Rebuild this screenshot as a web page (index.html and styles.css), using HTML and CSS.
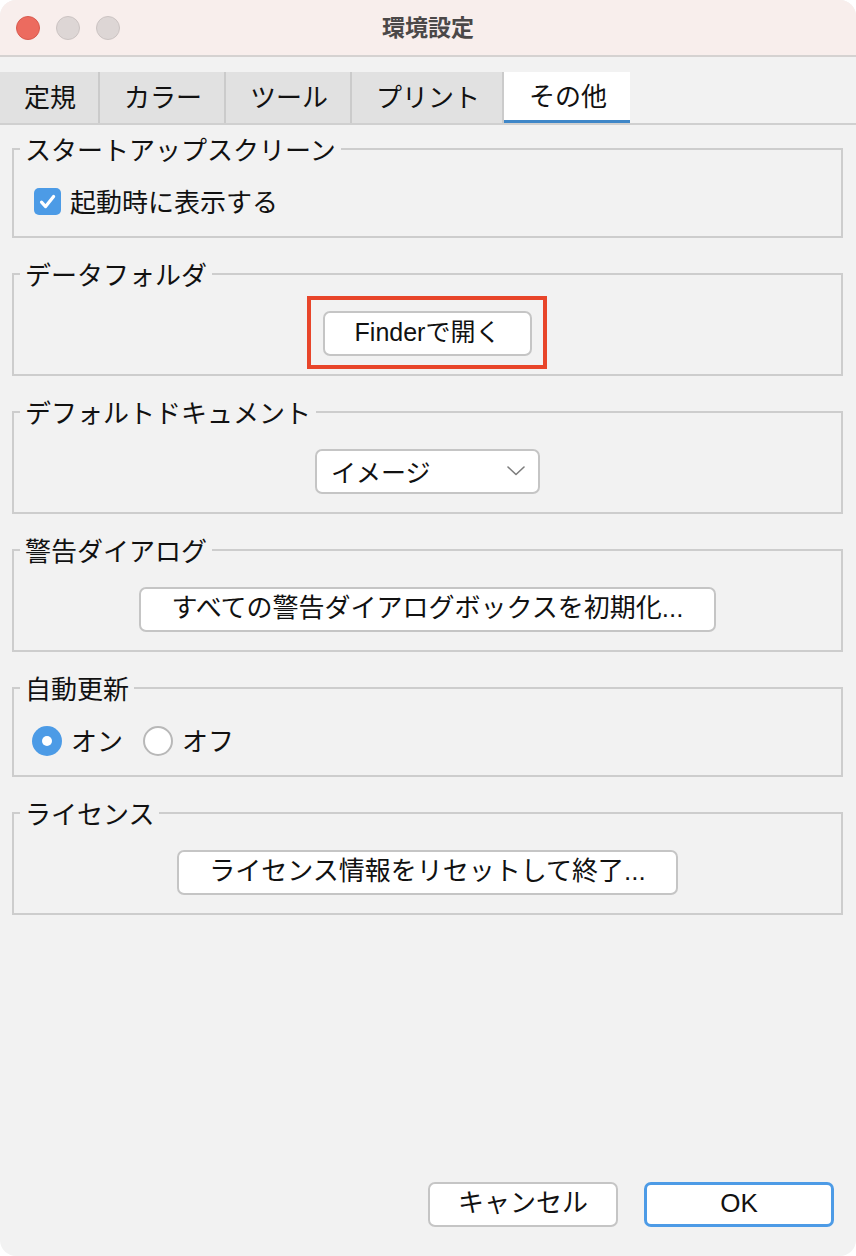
FILE: index.html
```html
<!DOCTYPE html>
<html lang="ja">
<head>
<meta charset="utf-8">
<title>環境設定</title>
<link rel="stylesheet" href="styles.css">
</head>
<body>
<div class="window">
  <header class="titlebar">
    <div class="lights">
      <span class="light light-red"></span>
      <span class="light"></span>
      <span class="light"></span>
    </div>
    <div class="title">環境設定</div>
    <div></div>
  </header>

  <nav class="tabs">
    <div class="tab">定規</div>
    <div class="tab">カラー</div>
    <div class="tab">ツール</div>
    <div class="tab">プリント</div>
    <div class="tab tab-active">その他</div>
  </nav>

  <main class="panel">
    <fieldset class="group group-compact">
      <legend>スタートアップスクリーン</legend>
      <div class="row row-left">
        <span class="checkbox">
          <svg width="27" height="27" viewBox="0 0 27 27"><path d="M7.5 14.2 L11.6 18.6 L19.6 8.4" fill="none" stroke="#fff" stroke-width="3.2" stroke-linecap="round" stroke-linejoin="round"/></svg>
        </span>
        <span class="label">起動時に表示する</span>
      </div>
    </fieldset>

    <fieldset class="group">
      <legend>データフォルダ</legend>
      <div class="row row-center">
        <button class="btn btn-highlight">Finderで開く</button>
      </div>
    </fieldset>

    <fieldset class="group">
      <legend>デフォルトドキュメント</legend>
      <div class="row row-center">
        <div class="select">
          <span>イメージ</span>
          <svg width="20" height="12" viewBox="0 0 20 12"><polyline points="2,2 10,9.5 18,2" fill="none" stroke="#7d7d7d" stroke-width="1.6" stroke-linecap="round" stroke-linejoin="round"/></svg>
        </div>
      </div>
    </fieldset>

    <fieldset class="group">
      <legend>警告ダイアログ</legend>
      <div class="row row-center">
        <button class="btn">すべての警告ダイアログボックスを初期化...</button>
      </div>
    </fieldset>

    <fieldset class="group group-compact">
      <legend>自動更新</legend>
      <div class="row row-left radios">
        <span class="radio-item"><span class="radio radio-on"></span><span class="label">オン</span></span>
        <span class="radio-item"><span class="radio"></span><span class="label">オフ</span></span>
      </div>
    </fieldset>

    <fieldset class="group">
      <legend>ライセンス</legend>
      <div class="row row-center">
        <button class="btn">ライセンス情報をリセットして終了...</button>
      </div>
    </fieldset>
  </main>

  <footer class="footer">
    <button class="btn btn-footer">キャンセル</button>
    <button class="btn btn-footer btn-default">OK</button>
  </footer>
</div>
</body>
</html>
```

FILE: styles.css
```css
* { box-sizing: border-box; }

html, body {
  margin: 0;
  padding: 0;
  background: #ffffff;
}

body {
  font-family: "Liberation Sans", "Noto Sans CJK JP", sans-serif;
  color: #111;
}

.window {
  width: 856px;
  height: 1256px;
  background: #f2f2f2;
  border-radius: 16px;
  overflow: hidden;
  display: flex;
  flex-direction: column;
}

/* Title bar */
.titlebar {
  height: 57px;
  flex: none;
  background: #f8eeec;
  border-bottom: 2px solid #d5d2d1;
  display: grid;
  grid-template-columns: 1fr auto 1fr;
  align-items: center;
}

.lights {
  display: flex;
  gap: 16px;
  padding-left: 16px;
}

.light {
  width: 24px;
  height: 24px;
  border-radius: 50%;
  background: #ddd6d5;
  border: 1px solid #cbc3c2;
}

.light-red {
  background: #ec6b5f;
  border-color: #d85a4f;
}

.title {
  font-family: "Noto Sans CJK JP", sans-serif;
  font-weight: 700;
  font-size: 23px;
  color: #4b4848;
  line-height: 30px;
  padding-bottom: 4px;
}

/* Tabs */
.tabs {
  flex: none;
  margin-top: 15px;
  display: flex;
  border-bottom: 2px solid #d0d0d0;
  height: 53px;
}

.tab {
  font-family: "Noto Sans CJK JP", sans-serif;
  font-size: 26px;
  line-height: 47px;
  height: 51px;
  padding: 0 22px 4px 24px;
  background: #e1e1e1;
  border-right: 2px solid #cbcbcb;
  color: #111;
  white-space: nowrap;
}

.tab-active {
  background: #ffffff;
  border-right: none;
  border-bottom: 3px solid #3f87c8;
  line-height: 45px;
  padding: 0 23px 3px 25px;
}

/* Panel */
.panel {
  flex: none;
  padding: 9px 13px 0 12px;
  display: flex;
  flex-direction: column;
  gap: 21px;
}

.group {
  margin: 0;
  border: 2px solid #cdcdcd;
  padding: 22px 6px 18px;
  min-width: 0;
}

.group-compact {
  padding-bottom: 19px;
}

.group legend {
  font-family: "Noto Sans CJK JP", sans-serif;
  font-size: 26px;
  line-height: 30px;
  padding: 0 5px;
  color: #111;
}

.row {
  display: flex;
  align-items: center;
}

.row-left {
  height: 31px;
  padding-left: 14px;
}

.row-center {
  justify-content: center;
}

.label {
  font-family: "Noto Sans CJK JP", sans-serif;
  font-size: 26px;
  line-height: 31px;
  color: #111;
  padding-bottom: 2px;
}

/* Checkbox */
.checkbox {
  width: 27px;
  height: 27px;
  border-radius: 5px;
  background: #4c9be6;
  margin-right: 9px;
  display: flex;
}

/* Radios */
.radios {
  padding-left: 12px;
  gap: 20px;
}

.radio-item {
  display: flex;
  align-items: center;
  gap: 9px;
}

.radio {
  width: 30px;
  height: 30px;
  border-radius: 50%;
  background: #fff;
  border: 2px solid #b8b8b8;
}

.radio-on {
  background: #4c9be6;
  border: none;
  position: relative;
}

.radio-on::after {
  content: "";
  position: absolute;
  left: 10px;
  top: 10px;
  width: 10px;
  height: 10px;
  border-radius: 50%;
  background: #fff;
}

/* Buttons */
.btn {
  font-family: "Liberation Sans", "Noto Sans CJK JP", sans-serif;
  font-size: 26px;
  color: #111;
  background: #ffffff;
  border: 2px solid #c5c5c5;
  border-radius: 7px;
  height: 45px;
  padding: 0 30px 2px;
  line-height: 39px;
  white-space: nowrap;
}

.btn-highlight {
  position: relative;
  padding: 0 30px 2px;
  font-size: 25px;
}

.btn-highlight::after {
  content: "";
  position: absolute;
  left: -18px;
  right: -17px;
  top: -17px;
  bottom: -15px;
  border: 4px solid #e8452a;
}

/* Select */
.select {
  width: 225px;
  height: 45px;
  background: #fff;
  border: 2px solid #c5c5c5;
  border-radius: 7px;
  display: flex;
  align-items: center;
  justify-content: space-between;
  padding: 0 12px 2px 14px;
  font-family: "Noto Sans CJK JP", sans-serif;
  font-size: 25px;
  color: #111;
}

/* Footer */
.footer {
  margin-top: auto;
  display: flex;
  justify-content: flex-end;
  gap: 26px;
  padding: 0 22px 29px 0;
}

.btn-footer {
  width: 190px;
  padding: 0 0 2px;
}

.btn-default {
  border: 3px solid #4d9be6;
  line-height: 37px;
}
```
